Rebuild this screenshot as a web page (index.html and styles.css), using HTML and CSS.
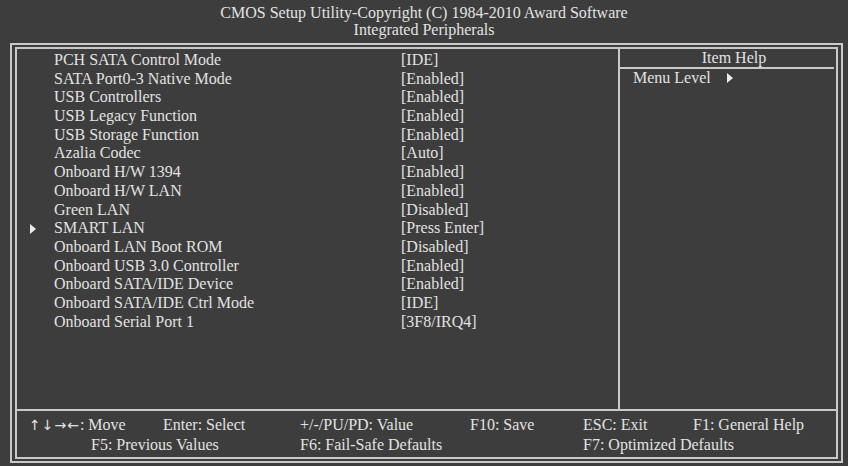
FILE: index.html
```html
<!DOCTYPE html>
<html>
<head>
<meta charset="utf-8">
<link rel="stylesheet" href="styles.css">
</head>
<body>
<div class="screen">
  <header class="title">
    <div>CMOS Setup Utility-Copyright (C) 1984-2010 Award Software</div>
    <div>Integrated Peripherals</div>
  </header>
  <div class="frame">
    <div class="inner">
      <div class="main">
        <div class="items">
          <div class="row"><span class="mark"></span><span class="label">PCH SATA Control Mode</span><span class="value">[IDE]</span></div>
          <div class="row"><span class="mark"></span><span class="label">SATA Port0-3 Native Mode</span><span class="value">[Enabled]</span></div>
          <div class="row"><span class="mark"></span><span class="label">USB Controllers</span><span class="value">[Enabled]</span></div>
          <div class="row"><span class="mark"></span><span class="label">USB Legacy Function</span><span class="value">[Enabled]</span></div>
          <div class="row"><span class="mark"></span><span class="label">USB Storage Function</span><span class="value">[Enabled]</span></div>
          <div class="row"><span class="mark"></span><span class="label">Azalia Codec</span><span class="value">[Auto]</span></div>
          <div class="row"><span class="mark"></span><span class="label">Onboard H/W 1394</span><span class="value">[Enabled]</span></div>
          <div class="row"><span class="mark"></span><span class="label">Onboard H/W LAN</span><span class="value">[Enabled]</span></div>
          <div class="row"><span class="mark"></span><span class="label">Green LAN</span><span class="value">[Disabled]</span></div>
          <div class="row"><span class="mark"><svg class="tri" width="6" height="10" viewBox="0 0 6 10"><polygon points="0,0 6,5 0,10" fill="#ececec"/></svg></span><span class="label">SMART LAN</span><span class="value">[Press Enter]</span></div>
          <div class="row"><span class="mark"></span><span class="label">Onboard LAN Boot ROM</span><span class="value">[Disabled]</span></div>
          <div class="row"><span class="mark"></span><span class="label">Onboard USB 3.0 Controller</span><span class="value">[Enabled]</span></div>
          <div class="row"><span class="mark"></span><span class="label">Onboard SATA/IDE Device</span><span class="value">[Enabled]</span></div>
          <div class="row"><span class="mark"></span><span class="label">Onboard SATA/IDE Ctrl Mode</span><span class="value">[IDE]</span></div>
          <div class="row"><span class="mark"></span><span class="label">Onboard Serial Port 1</span><span class="value">[3F8/IRQ4]</span></div>
        </div>
        <div class="help">
          <div class="help-title">Item Help</div>
          <div class="help-line">Menu Level<svg class="tri help-tri" width="6" height="10" viewBox="0 0 6 10"><polygon points="0,0 6,5 0,10" fill="#ececec"/></svg></div>
        </div>
      </div>
      <div class="keys">
        <div class="keyline first">
          <span class="k w134"><span class="arrows">↑↓→←</span>: Move</span>
          <span class="k w137">Enter: Select</span>
          <span class="k w170">+/-/PU/PD: Value</span>
          <span class="k w113">F10: Save</span>
          <span class="k w110">ESC: Exit</span>
          <span class="k">F1: General Help</span>
        </div>
        <div class="keyline second">
          <span class="k w209">F5: Previous Values</span>
          <span class="k w283">F6: Fail-Safe Defaults</span>
          <span class="k">F7: Optimized Defaults</span>
        </div>
      </div>
    </div>
  </div>
</div>
</body>
</html>
```

FILE: styles.css
```css
html, body {
  margin: 0;
  padding: 0;
  background: #3d3d3d;
}
body {
  font-family: "Liberation Serif", "Times New Roman", serif;
  font-size: 16px;
  color: #e2e2e2;
}
.screen {
  width: 848px;
  height: 466px;
  overflow: hidden;
}
.title {
  height: 43px;
  box-sizing: border-box;
  padding-top: 4px;
  text-align: center;
  line-height: 17px;
}
.frame {
  margin-left: 10px;
  width: 833px;
  height: 420px;
  box-sizing: border-box;
  border: 2px solid #c9c9c9;
  padding: 2px 3px;
}
.inner {
  height: 100%;
  box-sizing: border-box;
  border: 2px solid #c9c9c9;
  display: flex;
  flex-direction: column;
}
.main {
  height: 362px;
  display: flex;
  border-bottom: 2px solid #c9c9c9;
  box-sizing: border-box;
}
.items {
  width: 603px;
  padding-top: 2px;
  border-right: 2px solid #c9c9c9;
  box-sizing: border-box;
}
.row {
  display: flex;
  line-height: 18.7px;
  height: 18.7px;
  white-space: nowrap;
}
.mark {
  width: 37px;
  display: flex;
  align-items: center;
  padding-left: 13px;
  box-sizing: border-box;
}
.label {
  width: 347px;
}
.help {
  flex: 1;
}
.help-title {
  text-align: center;
  line-height: 18px;
  padding-left: 14px;
  margin-right: 2px;
  border-bottom: 2px solid #c9c9c9;
}
.help-line {
  display: flex;
  align-items: center;
  padding-left: 13px;
  line-height: 17px;
}
.help-tri {
  margin-left: 16px;
}
.keys {
  flex: 1;
  padding-top: 4px;
}
.keyline {
  display: flex;
  line-height: 19px;
  white-space: nowrap;
}
.arrows {
  font-family: "DejaVu Sans", sans-serif;
  font-size: 14px;
  letter-spacing: 1px;
}
.keyline.first { padding-left: 12px; }
.keyline.second { padding-left: 74px; }
.w134 { width: 134px; }
.w137 { width: 137px; }
.w170 { width: 170px; }
.w113 { width: 113px; }
.w110 { width: 110px; }
.w209 { width: 209px; }
.w283 { width: 283px; }
```
